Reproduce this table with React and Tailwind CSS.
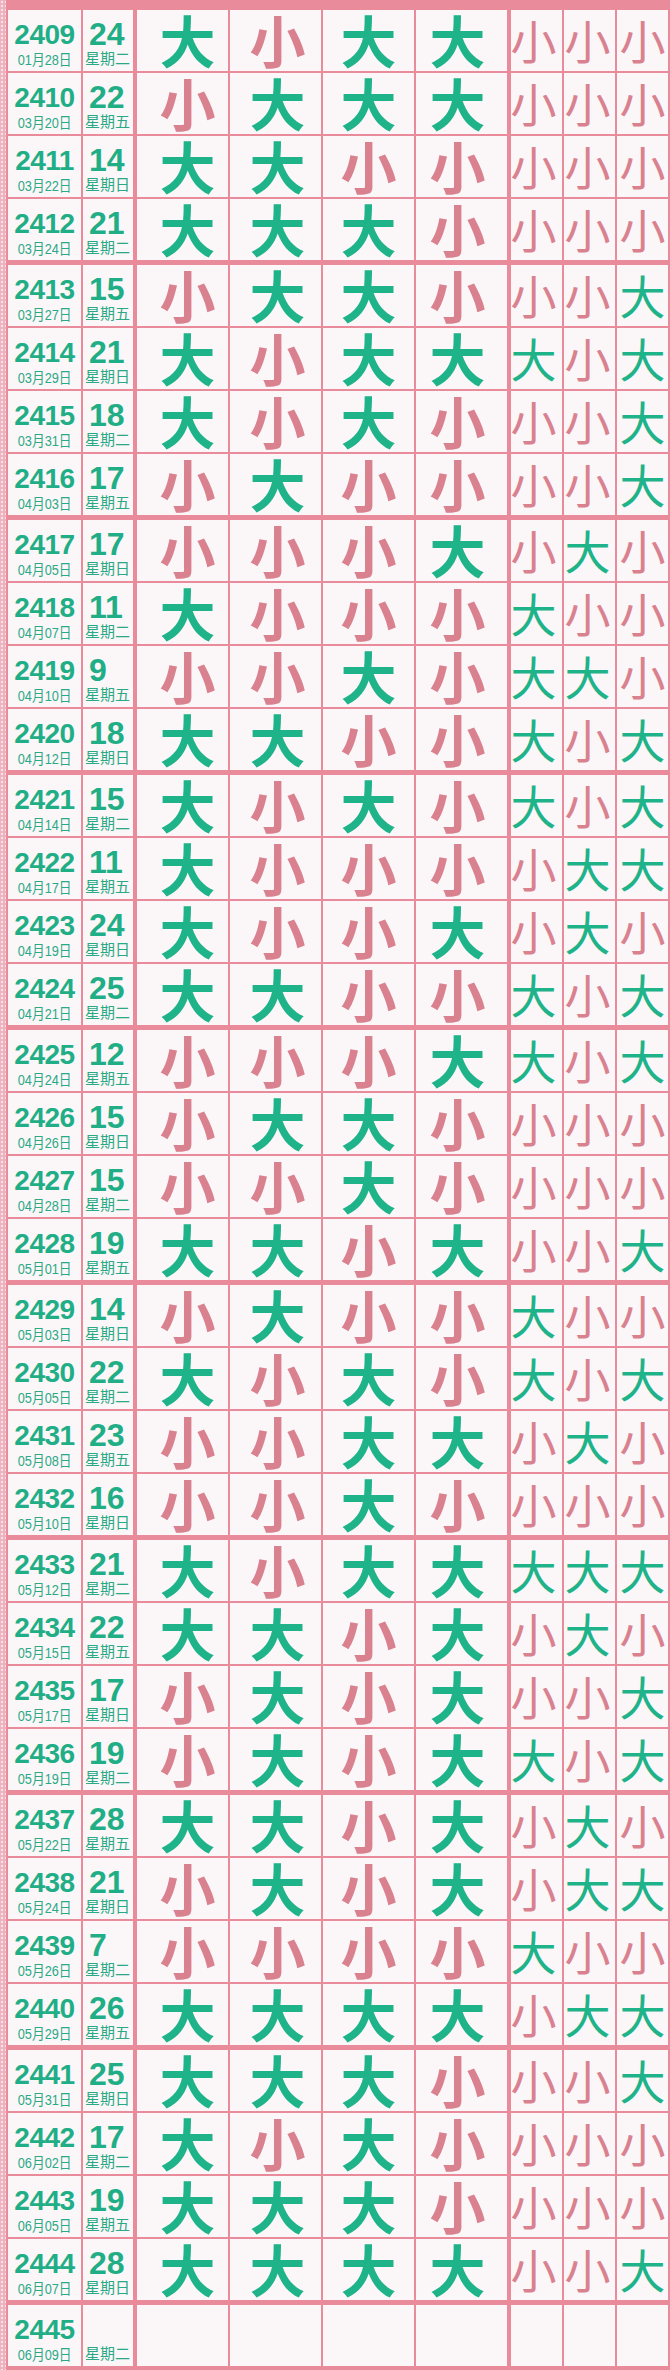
const rows = [
  ["2409", "24", "01月28日", "星期二", "大小大大", "小小小"],
  ["2410", "22", "03月20日", "星期五", "小大大大", "小小小"],
  ["2411", "14", "03月22日", "星期日", "大大小小", "小小小"],
  ["2412", "21", "03月24日", "星期二", "大大大小", "小小小"],
  ["2413", "15", "03月27日", "星期五", "小大大小", "小小大"],
  ["2414", "21", "03月29日", "星期日", "大小大大", "大小大"],
  ["2415", "18", "03月31日", "星期二", "大小大小", "小小大"],
  ["2416", "17", "04月03日", "星期五", "小大小小", "小小大"],
  ["2417", "17", "04月05日", "星期日", "小小小大", "小大小"],
  ["2418", "11", "04月07日", "星期二", "大小小小", "大小小"],
  ["2419", "9", "04月10日", "星期五", "小小大小", "大大小"],
  ["2420", "18", "04月12日", "星期日", "大大小小", "大小大"],
  ["2421", "15", "04月14日", "星期二", "大小大小", "大小大"],
  ["2422", "11", "04月17日", "星期五", "大小小小", "小大大"],
  ["2423", "24", "04月19日", "星期日", "大小小大", "小大小"],
  ["2424", "25", "04月21日", "星期二", "大大小小", "大小大"],
  ["2425", "12", "04月24日", "星期五", "小小小大", "大小大"],
  ["2426", "15", "04月26日", "星期日", "小大大小", "小小小"],
  ["2427", "15", "04月28日", "星期二", "小小大小", "小小小"],
  ["2428", "19", "05月01日", "星期五", "大大小大", "小小大"],
  ["2429", "14", "05月03日", "星期日", "小大小小", "大小小"],
  ["2430", "22", "05月05日", "星期二", "大小大小", "大小大"],
  ["2431", "23", "05月08日", "星期五", "小小大大", "小大小"],
  ["2432", "16", "05月10日", "星期日", "小小大小", "小小小"],
  ["2433", "21", "05月12日", "星期二", "大小大大", "大大大"],
  ["2434", "22", "05月15日", "星期五", "大大小大", "小大小"],
  ["2435", "17", "05月17日", "星期日", "小大小大", "小小大"],
  ["2436", "19", "05月19日", "星期二", "小大小大", "大小大"],
  ["2437", "28", "05月22日", "星期五", "大大小大", "小大小"],
  ["2438", "21", "05月24日", "星期日", "小大小大", "小大大"],
  ["2439", "7", "05月26日", "星期二", "小小小小", "大小小"],
  ["2440", "26", "05月29日", "星期五", "大大大大", "小大大"],
  ["2441", "25", "05月31日", "星期日", "大大大小", "小小大"],
  ["2442", "17", "06月02日", "星期二", "大小大小", "小小小"],
  ["2443", "19", "06月05日", "星期五", "大大大小", "小小小"],
  ["2444", "28", "06月07日", "星期日", "大大大大", "小小大"],
  ["2445", "", "06月09日", "星期二", "", ""],
];

// printed glyphs sit a little off-centre in each big column
const bigShift = ["pl-[10px]", "pl-[4px]", "pl-0", "pr-[8px]"];
const smallShift = ["pr-[6px]", "pr-[4px]", "pr-0"];

const cell = "bg-[#fbf6f8] h-full";
const tone = (ch) => (ch === "大" ? "text-[#1fb389]" : "text-[#d9818f]");

function BigCell({ ch, i }) {
  return (
    <div
      className={`${cell} w-[91px] ${i === 0 ? "ml-[4px]" : "ml-[2px]"} ${bigShift[i]} flex items-center justify-center pt-[6px]`}
    >
      {ch && (
        <span className={`text-[56px] leading-none font-bold ${tone(ch)}`}>
          {ch}
        </span>
      )}
    </div>
  );
}

function SmallCell({ ch, i }) {
  return (
    <div
      className={`${cell} w-[51px] ${i === 0 ? "ml-[4px]" : "ml-[2px]"} ${smallShift[i]} flex items-center justify-center pt-[4px]`}
    >
      {ch && (
        <span className={`text-[46px] leading-none font-normal ${tone(ch)}`}>
          {ch}
        </span>
      )}
    </div>
  );
}

export default function App() {
  return (
    <div className="w-[670px] h-[2370px] bg-[#e98b9b] flex font-['Liberation_Sans','Noto_Sans_CJK_SC',sans-serif]">
      {/* speckled paper edge */}
      <div className="w-[6px] h-full bg-[#eeb3be] bg-[radial-gradient(#f9e3e8_1px,transparent_1.5px)] bg-[length:4px_4px]" />

      <div className="flex-1 pl-[2px] pt-[10px] pr-[2px] pb-[4px] flex flex-col">
        {rows.map(([issue, num, date, day, big, small], r) => (
          <div
            key={issue}
            className={`flex h-[61px] shrink-0 ${r === 0 ? "" : r % 4 === 0 ? "mt-[5px]" : "mt-[2px]"}`}
          >
            {/* issue + date */}
            <div className={`${cell} w-[73px] flex flex-col items-center text-[#1fae86]`}>
              <div className="mt-[11px] h-[28px] text-[28px] leading-[28px] font-bold tracking-[-0.5px]">
                {issue}
              </div>
              <div className="mt-[3px] text-[15px] leading-[15px] text-[#2aa985] whitespace-nowrap scale-x-[0.85]">
                {date}
              </div>
            </div>

            {/* total + weekday */}
            <div className={`${cell} w-[50px] ml-[2px] flex flex-col text-[#1fae86]`}>
              <div className="mt-[8px] h-[32px] pl-[6px] text-[32px] leading-[32px] font-bold">
                {num}
              </div>
              <div className="mt-[1px] pl-[2px] text-[15px] leading-[15px] text-[#2aa985] whitespace-nowrap">
                {day}
              </div>
            </div>

            {[0, 1, 2, 3].map((i) => (
              <BigCell key={i} ch={big[i]} i={i} />
            ))}

            {[0, 1, 2].map((i) => (
              <SmallCell key={i} ch={small[i]} i={i} />
            ))}
          </div>
        ))}
      </div>
    </div>
  );
}
